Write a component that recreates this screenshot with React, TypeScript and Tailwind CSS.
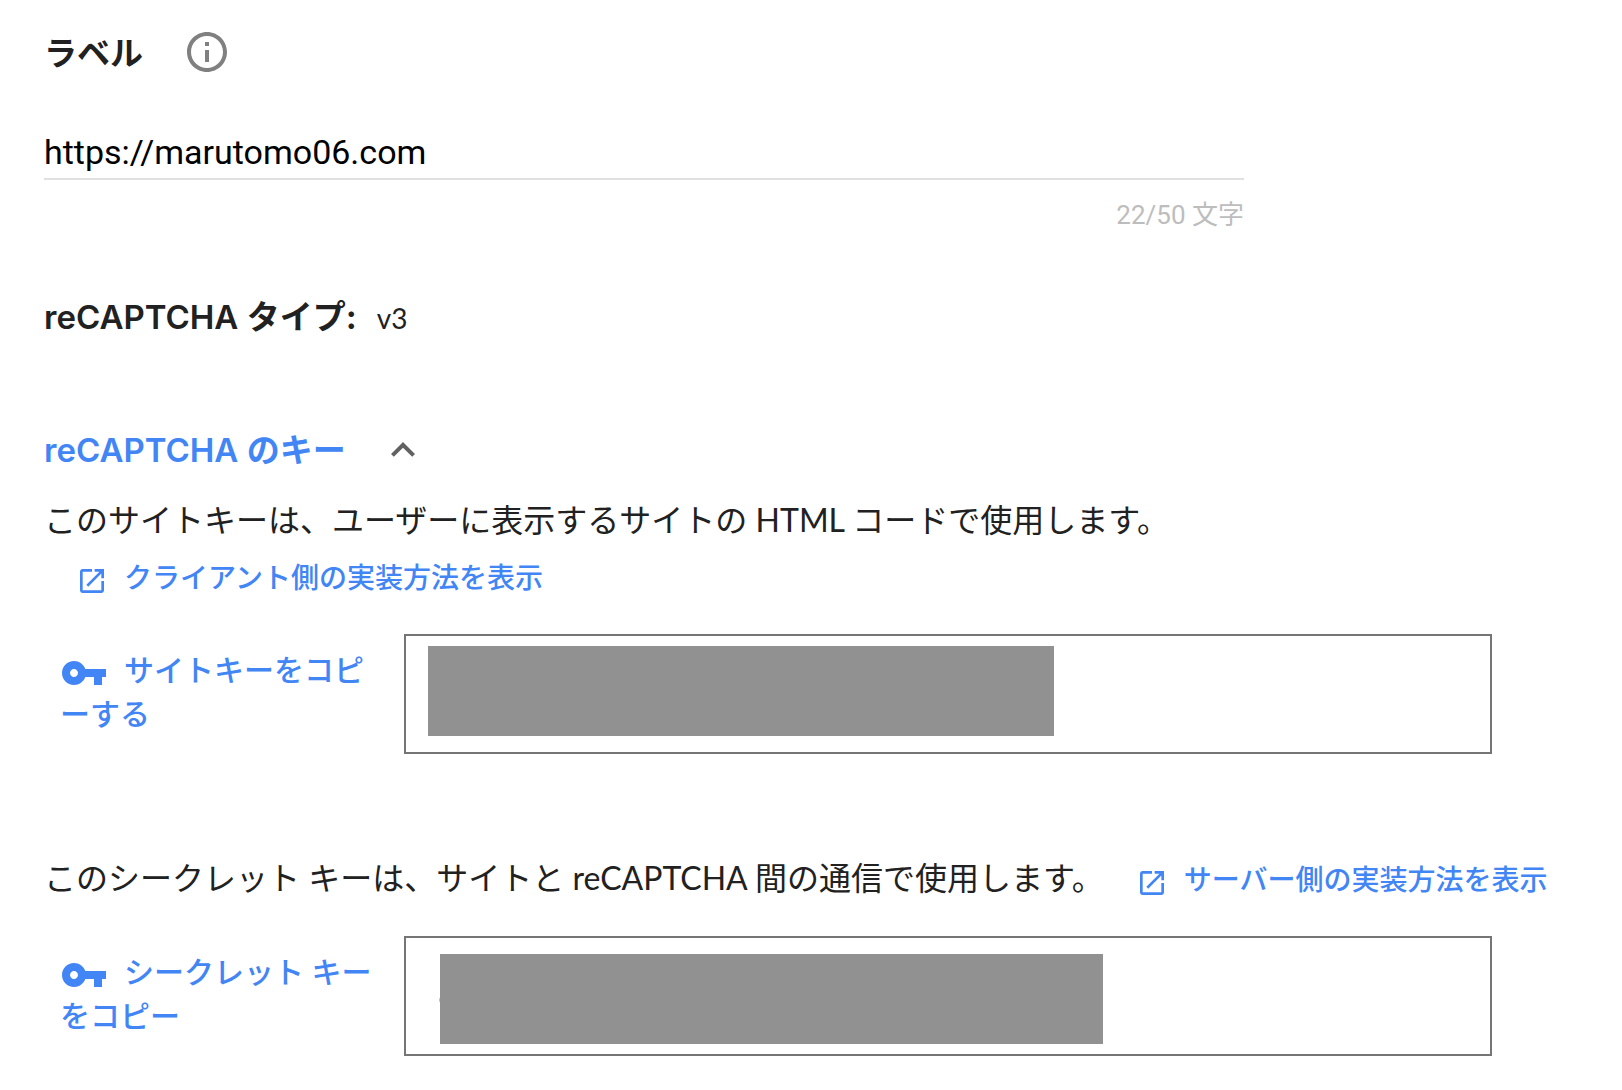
import { useState } from "react";
import type { ReactNode } from "react";

function InfoIcon() {
  return (
    <svg viewBox="0 0 24 24" className="size-12 fill-[#808080]" aria-hidden="true">
      <path d="M11 7h2v2h-2zm0 4h2v6h-2zm1-9C6.48 2 2 6.48 2 12s4.48 10 10 10 10-4.48 10-10S17.52 2 12 2zm0 18c-4.41 0-8-3.59-8-8s3.59-8 8-8 8 3.59 8 8-3.59 8-8 8z" />
    </svg>
  );
}

function ChevronIcon({ open }: { open: boolean }) {
  return (
    <svg
      viewBox="0 0 24 24"
      className={open ? "size-12 fill-[#616161]" : "size-12 rotate-180 fill-[#616161]"}
      aria-hidden="true"
    >
      <path d="M12 8l-6 6 1.41 1.41L12 10.83l4.59 4.58L18 14z" />
    </svg>
  );
}

function OpenInNewIcon() {
  return (
    <svg viewBox="0 0 24 24" className="mr-4 inline-block size-8 fill-current align-middle" aria-hidden="true">
      <path d="M19 19H5V5h7V3H5c-1.11 0-2 .9-2 2v14c0 1.1.89 2 2 2h14c1.1 0 2-.9 2-2v-7h-2v7zM14 3v2h3.59l-9.83 9.83 1.41 1.41L19 6.41V10h2V3h-7z" />
    </svg>
  );
}

function KeyIcon() {
  return (
    <svg viewBox="0 0 24 24" className="mr-4 inline-block size-12 -my-2 fill-current align-middle" aria-hidden="true">
      <path d="M12.65 10C11.83 7.67 9.61 6 7 6c-3.31 0-6 2.69-6 6s2.69 6 6 6c2.61 0 4.83-1.67 5.65-4H17v4h4v-4h2v-4H12.65zM7 14c-1.1 0-2-.9-2-2s.9-2 2-2 2 .9 2 2-.9 2-2 2z" />
    </svg>
  );
}

function DocLink({ children }: { children: ReactNode }) {
  return (
    <a href="#docs" className="ml-8 text-[28px] leading-12 font-medium text-[#4285f4]">
      <OpenInNewIcon />
      {children}
    </a>
  );
}

function KeyRow({ label, name, children }: { label: string; name: string; children: ReactNode }) {
  return (
    <div className="mt-[33px] flex max-w-[1448px] items-start">
      <button
        type="button"
        className="mr-6 ml-4 w-80 shrink-0 pt-[13px] text-left text-[30px] leading-11 font-medium break-all text-[#4285f4]"
      >
        <KeyIcon />
        {label}
      </button>
      <div className="relative min-w-0 flex-1">
        <input
          type="text"
          readOnly
          aria-label={name}
          className="block h-[120px] w-full border-2 border-[#757575] bg-white px-6 outline-none"
        />
        {children}
      </div>
    </div>
  );
}

export default function App() {
  const [site, setSite] = useState("https://marutomo06.com");
  const [open, setOpen] = useState(true);

  return (
    <main
      lang="ja"
      className="bg-white px-11 pt-7 pb-8 font-['Lato','Noto_Sans_CJK_JP',sans-serif] text-[#212121]"
    >
      <div className="flex items-center gap-10">
        <label htmlFor="site-label" className="text-[33px] leading-12 font-bold">
          ラベル
        </label>
        <button type="button" aria-label="ラベルの説明">
          <InfoIcon />
        </button>
      </div>

      <div className="mt-11 max-w-[1200px]">
        <input
          id="site-label"
          type="text"
          maxLength={50}
          value={site}
          onChange={(e) => setSite(e.target.value)}
          className="block h-[60px] w-full border-b-2 border-[#e0e0e0] pt-1.5 font-['Roboto',sans-serif] text-[34px] text-black outline-none"
        />
        <p className="mt-[19px] text-right font-['Roboto','Noto_Sans_CJK_JP',sans-serif] text-[26px] leading-8 text-[#bdbdbd]">
          {site.length}/50 文字
        </p>
      </div>

      <div className="mt-[62px] flex items-baseline gap-5">
        <h2 className="font-['Inter','Noto_Sans_CJK_JP',sans-serif] text-[33px] leading-12 font-semibold">
          reCAPTCHA <span className="font-bold">タイプ:</span>
        </h2>
        <span className="text-[28px] leading-12">v3</span>
      </div>

      <h2 className="mt-[84px] font-['Inter','Noto_Sans_CJK_JP',sans-serif] text-[33px] leading-12 font-semibold text-[#4285f4]">
        <button
          type="button"
          aria-expanded={open}
          onClick={() => setOpen(!open)}
          className="flex items-center gap-[33px]"
        >
          <span>
            reCAPTCHA <span className="font-bold">のキー</span>
          </span>
          <ChevronIcon open={open} />
        </button>
      </h2>

      {open && (
        <>
          <section className="mt-[22px]">
            <div className="flex flex-wrap items-baseline gap-y-[9px]">
              <p className="text-[32px] leading-12">
                このサイトキーは、ユーザーに表示するサイトの HTML コードで使用します。
              </p>
              <DocLink>クライアント側の実装方法を表示</DocLink>
            </div>
            <KeyRow label="サイトキーをコピーする" name="サイトキー">
              <span className="absolute top-3 left-6 h-[90px] w-[626px] bg-[#919191]" />
            </KeyRow>
          </section>

          <section className="mt-25">
            <div className="flex flex-wrap items-baseline gap-y-[9px]">
              <p className="text-[32px] leading-12">
                このシークレット キーは、サイトと reCAPTCHA 間の通信で使用します。
              </p>
              <DocLink>サーバー側の実装方法を表示</DocLink>
            </div>
            <KeyRow label="シークレット キーをコピー" name="シークレット キー">
              <span className="absolute top-[61px] left-[35px] h-1.5 w-1.5 rounded-full bg-[#bdbdbd]" />
              <span className="absolute top-[18px] left-9 h-[90px] w-[663px] bg-[#919191]" />
            </KeyRow>
          </section>
        </>
      )}
    </main>
  );
}
